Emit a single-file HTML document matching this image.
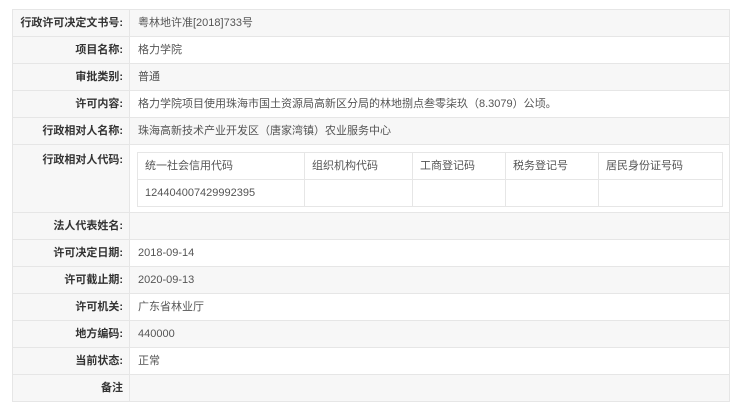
<!DOCTYPE html>
<html><head><meta charset="utf-8"><style>
body{margin:0;background:#fff;font-family:"Liberation Sans","Noto Sans CJK SC",sans-serif;font-size:11px;color:#555;}
.r{position:absolute;left:12px;width:716px;height:26px;border:1px solid #e6e6e6;border-bottom:none;}
.r .l{position:absolute;left:0;top:0;width:117px;height:100%;background:#f7f7f7;border-right:1px solid #e6e6e6;text-align:right;font-weight:bold;color:#333;line-height:26px;box-sizing:border-box;padding-right:6px;white-space:nowrap;}
.r .v{position:absolute;left:125px;top:0;line-height:26px;white-space:nowrap;}
.g{background:#f7f7f7;}
.last{border-bottom:1px solid #e6e6e6;}
table.i{position:absolute;left:124px;top:7px;border-collapse:collapse;table-layout:fixed;width:586px;}
table.i td{border:1px solid #e6e6e6;height:26px;padding:0 0 0 7px;background:#fff;line-height:26px;white-space:nowrap;}
</style></head><body>
<div class="r g" style="top:9px"><div class="l">行政许可决定文书号:</div><div class="v">粤林地许准[2018]733号</div></div>
<div class="r" style="top:36px"><div class="l">项目名称:</div><div class="v">格力学院</div></div>
<div class="r g" style="top:63px"><div class="l">审批类别:</div><div class="v">普通</div></div>
<div class="r" style="top:90px"><div class="l">许可内容:</div><div class="v">格力学院项目使用珠海市国土资源局高新区分局的林地捌点叁零柒玖（8.3079）公顷。</div></div>
<div class="r g" style="top:117px"><div class="l">行政相对人名称:</div><div class="v">珠海高新技术产业开发区（唐家湾镇）农业服务中心</div></div>
<div class="r" style="top:144px;height:67px"><div class="l" style="line-height:30px">行政相对人代码:</div>
<table class="i"><colgroup><col style="width:167px"><col style="width:108px"><col style="width:93px"><col style="width:93px"><col></colgroup>
<tr><td>统一社会信用代码</td><td>组织机构代码</td><td>工商登记码</td><td>税务登记号</td><td>居民身份证号码</td></tr>
<tr><td>124404007429992395</td><td></td><td></td><td></td><td></td></tr>
</table></div>
<div class="r g" style="top:212px"><div class="l">法人代表姓名:</div><div class="v"></div></div>
<div class="r" style="top:239px"><div class="l">许可决定日期:</div><div class="v">2018-09-14</div></div>
<div class="r g" style="top:266px"><div class="l">许可截止期:</div><div class="v">2020-09-13</div></div>
<div class="r" style="top:293px"><div class="l">许可机关:</div><div class="v">广东省林业厅</div></div>
<div class="r g" style="top:320px"><div class="l">地方编码:</div><div class="v">440000</div></div>
<div class="r" style="top:347px"><div class="l">当前状态:</div><div class="v">正常</div></div>
<div class="r g last" style="top:374px"><div class="l">备注</div><div class="v"></div></div>
</body></html>
